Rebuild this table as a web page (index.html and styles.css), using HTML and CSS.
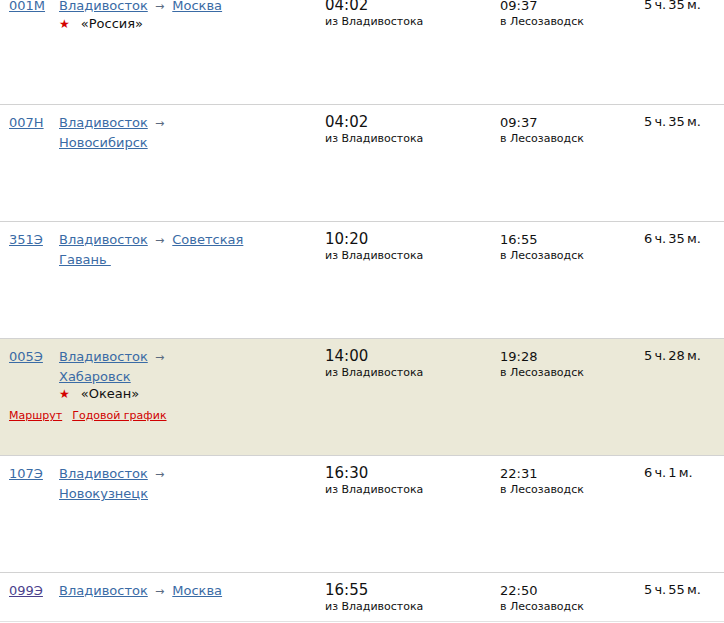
FILE: index.html
```html
<!DOCTYPE html>
<html lang="ru">
<head>
<meta charset="utf-8">
<title>Расписание</title>
<link rel="stylesheet" href="styles.css">
</head>
<body>
<div class="table">
  <div class="row">
    <div class="num"><a href="#">001М</a></div>
    <div class="route"><a href="#">Владивосток</a> <span class="arrow">→</span> <a href="#">Москва</a>
      <div class="name"><span class="star">★</span>«Россия»</div></div>
    <div class="dep"><div class="time">04:02</div><div class="sub">из Владивостока</div></div>
    <div class="arr"><div class="time2">09:37</div><div class="sub">в Лесозаводск</div></div>
    <div class="dur">5 ч. 35 м.</div>
  </div>
  <div class="row">
    <div class="num"><a href="#">007Н</a></div>
    <div class="route"><a href="#">Владивосток</a> <span class="arrow">→</span> <a href="#">Новосибирск</a></div>
    <div class="dep"><div class="time">04:02</div><div class="sub">из Владивостока</div></div>
    <div class="arr"><div class="time2">09:37</div><div class="sub">в Лесозаводск</div></div>
    <div class="dur">5 ч. 35 м.</div>
  </div>
  <div class="row">
    <div class="num"><a href="#">351Э</a></div>
    <div class="route"><a href="#">Владивосток</a> <span class="arrow">→</span> <a href="#">Советская Гавань&nbsp;</a></div>
    <div class="dep"><div class="time">10:20</div><div class="sub">из Владивостока</div></div>
    <div class="arr"><div class="time2">16:55</div><div class="sub">в Лесозаводск</div></div>
    <div class="dur">6 ч. 35 м.</div>
  </div>
  <div class="row hl">
    <div class="num"><a href="#">005Э</a></div>
    <div class="route"><a href="#">Владивосток</a> <span class="arrow">→</span><br><a href="#">Хабаровск</a>
      <div class="name"><span class="star">★</span>«Океан»</div></div>
    <div class="dep"><div class="time">14:00</div><div class="sub">из Владивостока</div></div>
    <div class="arr"><div class="time2">19:28</div><div class="sub">в Лесозаводск</div></div>
    <div class="dur">5 ч. 28 м.</div>
    <div class="extra"><a href="#">Маршрут</a><a href="#">Годовой график</a></div>
  </div>
  <div class="row">
    <div class="num"><a href="#">107Э</a></div>
    <div class="route"><a href="#">Владивосток</a> <span class="arrow">→</span> <a href="#">Новокузнецк</a></div>
    <div class="dep"><div class="time">16:30</div><div class="sub">из Владивостока</div></div>
    <div class="arr"><div class="time2">22:31</div><div class="sub">в Лесозаводск</div></div>
    <div class="dur">6 ч. 1 м.</div>
  </div>
  <div class="row last">
    <div class="num"><a href="#" class="visited">099Э</a></div>
    <div class="route"><a href="#">Владивосток</a> <span class="arrow">→</span> <a href="#">Москва</a></div>
    <div class="dep"><div class="time">16:55</div><div class="sub">из Владивостока</div></div>
    <div class="arr"><div class="time2">22:50</div><div class="sub">в Лесозаводск</div></div>
    <div class="dur">5 ч. 55 м.</div>
  </div>
</div>
</body>
</html>
```
FILE: styles.css
```css
html, body {
  margin: 0;
  padding: 0;
  background: #fff;
}
body {
  font-family: "DejaVu Sans", Verdana, sans-serif;
  font-size: 13px;
  color: #111;
  overflow: hidden;
}
a {
  color: #3a6ba5;
  text-decoration: underline;
}
a.visited {
  color: #4a3f8c;
}
.table {
  margin-top: -13px;
}
.row {
  box-sizing: border-box;
  height: 117px;
  border-top: 1px solid #d2d2d2;
  display: grid;
  grid-template-columns: 50px 266px 175px 144px 1fr;
  grid-template-rows: auto 1fr;
  align-content: start;
  padding: 8px 0 0 9px;
  line-height: 19px;
}
.row.hl {
  background: #ebe9d8;
}
.row.last {
  height: 50px;
  border-bottom: 1px solid #e2e2e2;
}
.route {
  padding-right: 76px;
}
.arrow {
  color: #5a6a80;
  font-size: 11px;
  margin: 0 4px 0 3px;
}
.name {
  line-height: 16px;
  color: #111;
}
.star {
  color: #d40000;
  font-size: 12px;
  margin-right: 11px;
}
.time {
  font-size: 15px;
  color: #111;
}
.time2 {
  color: #111;
}
.sub {
  font-size: 11px;
  line-height: 14px;
}
.dur {
  word-spacing: -2px;
  margin-top: -1px;
}
.extra {
  grid-column: 1 / -1;
  margin-top: 7px;
  font-size: 11px;
  line-height: 14px;
}
.extra a {
  color: #d00000;
  margin-right: 10px;
}
```
